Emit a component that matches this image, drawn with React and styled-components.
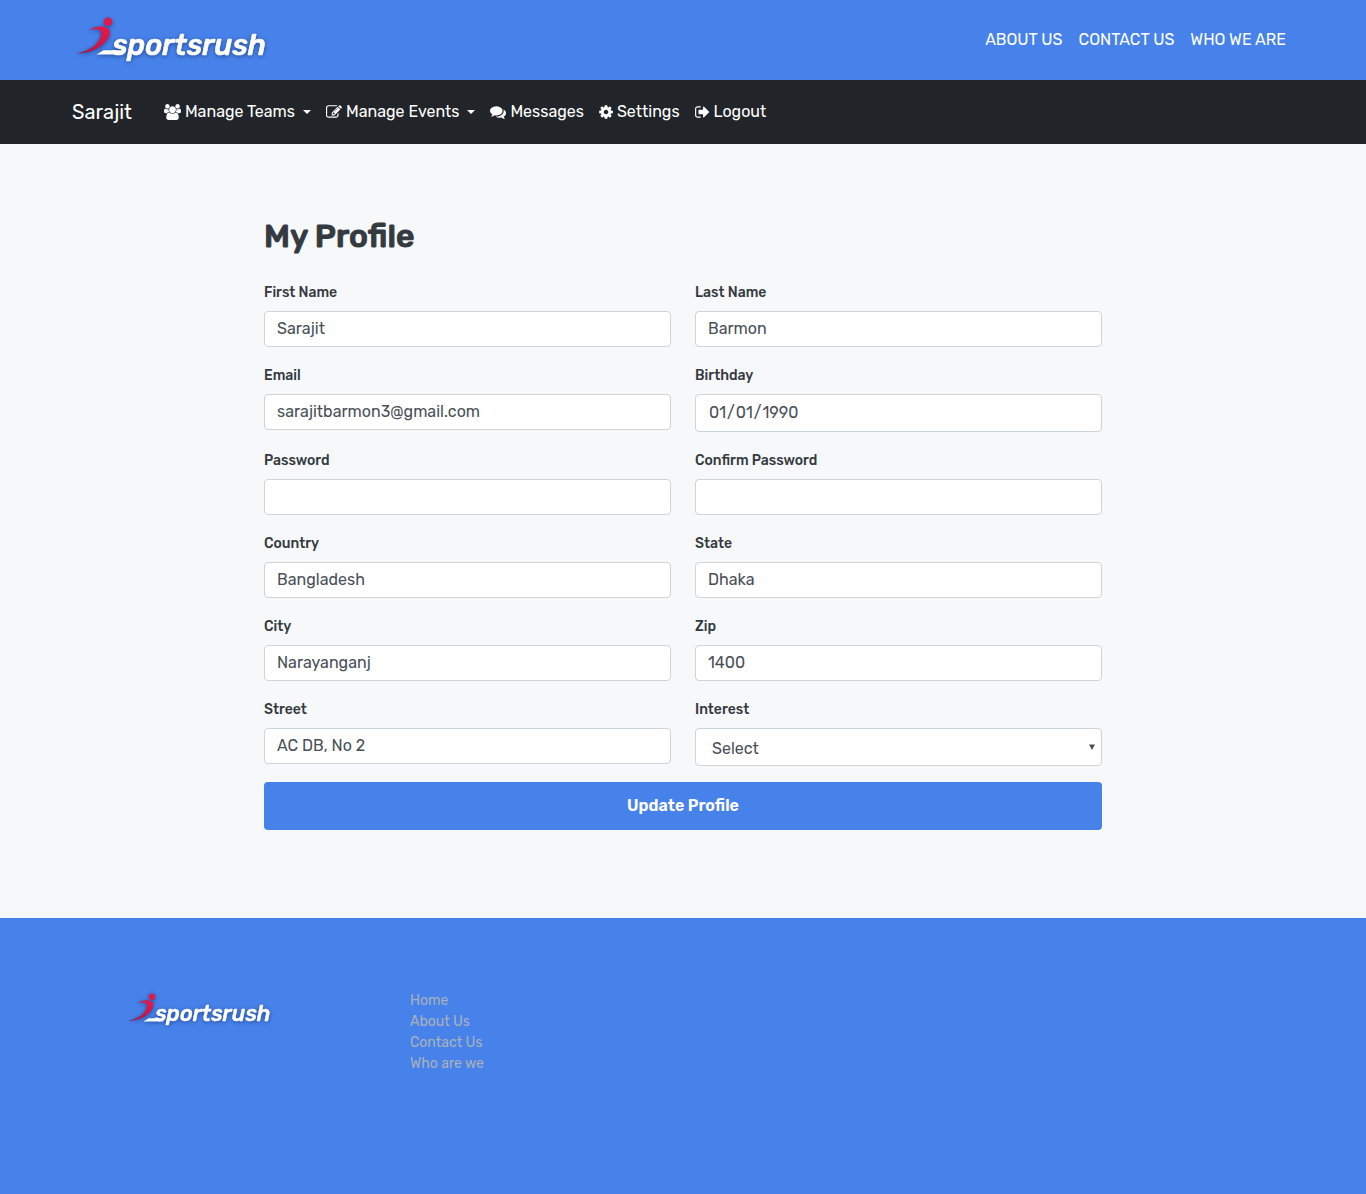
import React from "react";
import styled, { createGlobalStyle } from "styled-components";

const GlobalStyle = createGlobalStyle`
  *, *::before, *::after { box-sizing: border-box; }
  body {
    margin: 0;
    background: #f7f8fa;
    color: #343a40;
    font-family: Rubik, Roboto, "Liberation Sans", sans-serif;
    font-size: 16px;
    line-height: 24px;
  }
  a { color: inherit; text-decoration: none; }
`;

const Masthead = styled.header`
  display: flex;
  align-items: center;
  justify-content: space-between;
  padding: 10px 72px;
  background: #4782ea;
`;

const LogoLink = styled.a`
  display: block;
`;

const LogoSvg = styled.svg`
  display: block;
  width: ${(p) => p.$width}px;
  height: auto;
  overflow: visible;
  filter: drop-shadow(0 1px 2px rgba(10, 30, 90, 0.55));
`;

const TopLinks = styled.nav`
  display: flex;
  gap: 16px;
  padding: 0 8px;
  color: #fff;
`;

const Navbar = styled.nav`
  display: flex;
  align-items: center;
  min-height: 64px;
  padding: 8px 72px;
  background: #212529;
  color: #fff;
`;

const Brand = styled.a`
  margin-right: 32px;
  font-size: 20px;
`;

const NavList = styled.ul`
  display: flex;
  flex-wrap: wrap;
  gap: 15px;
  margin: 0;
  padding: 0;
  list-style: none;
`;

const NavItem = styled.a`
  display: flex;
  align-items: center;
  gap: 4px;
`;

const Glyph = styled.svg`
  display: block;
  width: ${(p) => p.$width}px;
  height: 16px;
  fill: currentColor;
`;

const Caret = styled.span`
  margin-left: 4px;
  border-top: 4px solid;
  border-left: 4px solid transparent;
  border-right: 4px solid transparent;
`;

const Main = styled.main`
  max-width: 838px;
  margin: 0 auto;
  padding: 72px 0 88px;
`;

const Title = styled.h1`
  margin: 0 0 24px;
  font-size: 32px;
  font-weight: 500;
  line-height: 40px;
  -webkit-text-stroke: 1px currentColor;
`;

const FieldGrid = styled.div`
  display: grid;
  grid-template-columns: 1fr 1fr;
  gap: 16px 24px;
  align-items: start;
  margin-bottom: 16px;
`;

const Field = styled.div`
  display: flex;
  flex-direction: column;
  gap: 6px;
`;

const Label = styled.label`
  font-size: 14px;
  font-weight: 500;
  line-height: 25px;
`;

const Input = styled.input`
  width: 100%;
  height: ${(p) => (p.type === "date" ? 38 : 36)}px;
  padding: 4px 12px 6px;
  border: 1px solid #ced4da;
  border-radius: 4px;
  background: #fff;
  color: #495057;
  font-family: inherit;
  font-size: 16px;
  font-weight: 400;

  &::-webkit-calendar-picker-indicator {
    display: none;
  }
`;

const SelectBox = styled.div`
  display: grid;
  align-items: center;
`;

const Select = styled.select`
  grid-area: 1 / 1;
  width: 100%;
  height: 38px;
  padding: 8px 16px 6px;
  border: 1px solid #ced4da;
  border-radius: 4px;
  appearance: none;
  background: #fff;
  color: #495057;
  font-family: inherit;
  font-size: 16px;
  font-weight: 400;
`;

const SelectArrow = styled.svg`
  grid-area: 1 / 1;
  justify-self: end;
  width: 6px;
  height: 6px;
  margin-right: 7px;
  fill: #495057;
  pointer-events: none;
`;

const SubmitButton = styled.button`
  width: 100%;
  height: 48px;
  border: 0;
  border-radius: 4px;
  background: #4782ea;
  color: #fff;
  font-family: inherit;
  font-size: 16px;
  font-weight: 600;
  line-height: 24px;
`;

const Footer = styled.footer`
  padding: 70px 0 120px;
  background: #4782ea;
`;

const FooterGrid = styled.div`
  display: grid;
  grid-template-columns: repeat(4, 1fr);
  max-width: 1140px;
  margin: 0 auto;
`;

const FooterColumn = styled.div`
  padding: 0 12px;
`;

const FooterLinks = styled.ul`
  margin: 2px 0 0;
  padding: 0;
  list-style: none;
  color: #a9b1bb;
  font-size: 14px;
  line-height: 21px;
`;

function Logo({ width, id }) {
  return (
    <LogoSvg $width={width} viewBox="0 0 200 60" role="img" aria-label="sportsrush">
      <defs>
        <linearGradient id={id} x1="0" y1="1" x2="1" y2="0">
          <stop offset="0" stopColor="#8e1d55" />
          <stop offset="0.45" stopColor="#c41a48" />
          <stop offset="1" stopColor="#e8184a" />
        </linearGradient>
      </defs>
      <circle cx="36" cy="11.7" r="4.3" fill="#de1a4c" />
      <path
        d="M16.5 20.4 C22 16 30 15.6 34.5 17.4 C39.5 19.6 38.5 26 34 31.2 C27 39.4 16 43.6 4.6 43.6 C13 41.4 20 38.6 24.6 33.6 C28.6 29 30.5 23 28 20.6 C25.6 18.8 21 19 16.5 20.4 Z"
        fill={`url(#${id})`}
      />
      <path d="M24.5 44.5 L31.5 40.3 H51 V44.5 Z" fill="#fff" />
      <text
        x="40"
        y="44.5"
        fill="#fff"
        stroke="#fff"
        strokeWidth="0.6"
        fontFamily="Rubik, Roboto, sans-serif"
        fontSize="29"
        fontStyle="italic"
        fontWeight="500"
      >
        sportsrush
      </text>
    </LogoSvg>
  );
}

const ICONS = {
  users: {
    box: "-64 0 1920 1792",
    width: 17,
    d: "M529 896q-162 5-265 128h-134q-82 0-138-40.5t-56-118.5q0-353 124-353 6 0 43.5 21t97.5 42.5 119 21.5q67 0 133-23-5 37-5 66 0 139 81 256zm1071 637q0 120-73 189.5t-194 69.5h-874q-121 0-194-69.5t-73-189.5q0-53 3.5-103.5t14-109 26.5-108.5 43-97.5 62-81 85.5-53.5 111.5-20q10 0 43 21.5t73 48 107 48 135 21.5 135-21.5 107-48 73-48 43-21.5q61 0 111.5 20t85.5 53.5 62 81 43 97.5 26.5 108.5 14 109 3.5 103.5zm-1024-1277q0 106-75 181t-181 75-181-75-75-181 75-181 181-75 181 75 75 181zm704 384q0 159-112.5 271.5t-271.5 112.5-271.5-112.5-112.5-271.5 112.5-271.5 271.5-112.5 271.5 112.5 112.5 271.5zm576 225q0 78-56 118.5t-138 40.5h-134q-103-123-265-128 81-117 81-256 0-29-5-66 66 23 133 23 59 0 119-21.5t97.5-42.5 43.5-21q124 0 124 353zm-128-609q0 106-75 181t-181 75-181-75-75-181 75-181 181-75 181 75 75 181z",
  },
  edit: {
    box: "0 0 1792 1792",
    width: 16,
    d: "M888 1184l116-116-152-152-116 116v56h96v96h56zm440-720q-16-16-33 1l-350 350q-17 17-1 33t33-1l350-350q17-17 1-33zm80 594v190q0 119-84.5 203.5t-203.5 84.5h-832q-119 0-203.5-84.5t-84.5-203.5v-832q0-119 84.5-203.5t203.5-84.5h832q63 0 117 25 15 7 18 23 3 17-9 29l-49 49q-14 14-32 8-23-6-45-6h-832q-66 0-113 47t-47 113v832q0 66 47 113t113 47h832q66 0 113-47t47-113v-126q0-13 9-22l64-64q15-15 35-7t20 29zm-96-738l288 288-672 672h-288v-288zm444 132l-92 92-288-288 92-92q28-28 68-28t68 28l152 152q28 28 28 68t-28 68z",
  },
  comments: {
    box: "0 0 1792 1792",
    width: 16,
    d: "M1408 768q0 139-94 257t-256.5 186.5-353.5 68.5q-86 0-176-16-124 88-278 128-36 9-86 16h-3q-11 0-20.5-8t-11.5-21q-1-3-1-6.5t.5-6.5 2-6l2.5-5 3.5-5.5 4-5 4.5-5 4-4.5q5-6 23-25t26-29.5 22.5-29 25-38.5 20.5-44q-124-72-195-177t-71-224q0-139 94-257t256.5-186.5 353.5-68.5 353.5 68.5 256.5 186.5 94 257zm384 256q0 120-71 224.5t-195 176.5q10 24 20.5 44t25 38.5 22.5 29 26 29.5 23 25q1 1 4 4.5t4.5 5 4 5 3.5 5.5l2.5 5 2 6 .5 6.5-1 6.5q-3 14-13 22t-22 7q-50-7-86-16-154-40-278-128-90 16-176 16-271 0-472-132 58 4 88 4 161 0 309-45t264-129q125-92 192-212t67-254q0-77-23-152 129 71 204 178t75 230z",
  },
  cog: {
    box: "128 0 1536 1792",
    width: 14,
    d: "M1152 896q0-106-75-181t-181-75-181 75-75 181 75 181 181 75 181-75 75-181zm512-109v222q0 12-8 23t-20 13l-185 28q-19 54-39 91 35 50 107 138 10 12 10 25t-9 23q-27 37-99 108t-94 71q-12 0-26-9l-138-108q-44 23-91 38-16 136-29 186-7 28-36 28h-222q-14 0-24.5-8.5t-11.5-21.5l-28-184q-49-16-90-37l-141 107q-10 9-25 9-14 0-25-11-126-114-165-168-7-10-7-23 0-12 8-23 15-21 51-66.5t54-70.5q-27-50-41-99l-183-27q-13-2-21-12.5t-8-23.5v-222q0-12 8-23t19-13l186-28q14-46 39-92-40-57-107-138-10-12-10-24 0-10 9-23 26-36 98.5-107.5t94.5-71.5q13 0 26 10l138 107q44-23 91-38 16-136 29-186 7-28 36-28h222q14 0 24.5 8.5t11.5 21.5l28 184q49 16 90 37l142-107q9-9 24-9 13 0 25 10 129 119 165 170 7 8 7 22 0 12-8 23-15 21-51 66.5t-54 70.5q26 50 41 98l183 28q13 2 21 12.5t8 23.5z",
  },
  signOut: {
    box: "64 0 1664 1792",
    width: 15,
    d: "M704 1440q0 4 1 20t.5 26.5-3 23.5-10 19.5-20.5 6.5h-320q-119 0-203.5-84.5t-84.5-203.5v-704q0-119 84.5-203.5t203.5-84.5h320q13 0 22.5 9.5t9.5 22.5q0 4 1 20t.5 26.5-3 23.5-10 19.5-20.5 6.5h-320q-66 0-113 47t-47 113v704q0 66 47 113t113 47h312l11.5 1 11.5 3 8 5.5 7 9 2 13.5zm928-544q0 26-19 45l-544 544q-19 19-45 19t-45-19-19-45v-288h-448q-26 0-45-19t-19-45v-384q0-26 19-45t45-19h448v-288q0-26 19-45t45-19 45 19l544 544q19 19 19 45z",
  },
};

const NAV = [
  { icon: "users", text: "Manage Teams", menu: true },
  { icon: "edit", text: "Manage Events", menu: true },
  { icon: "comments", text: "Messages" },
  { icon: "cog", text: "Settings" },
  { icon: "signOut", text: "Logout" },
];

const FIELDS = [
  { id: "first-name", label: "First Name", value: "Sarajit" },
  { id: "last-name", label: "Last Name", value: "Barmon" },
  { id: "email", label: "Email", value: "sarajitbarmon3@gmail.com", type: "email" },
  { id: "birthday", label: "Birthday", value: "1990-01-01", type: "date" },
  { id: "password", label: "Password", value: "", type: "password" },
  { id: "confirm-password", label: "Confirm Password", value: "", type: "password" },
  { id: "country", label: "Country", value: "Bangladesh" },
  { id: "state", label: "State", value: "Dhaka" },
  { id: "city", label: "City", value: "Narayanganj" },
  { id: "zip", label: "Zip", value: "1400" },
  { id: "street", label: "Street", value: "AC DB, No 2" },
];

export default function App() {
  return (
    <>
      <GlobalStyle />
      <Masthead>
        <LogoLink href="#home">
          <Logo width={200} id="runner-top" />
        </LogoLink>
        <TopLinks>
          <a href="#about">ABOUT US</a>
          <a href="#contact">CONTACT US</a>
          <a href="#who">WHO WE ARE</a>
        </TopLinks>
      </Masthead>
      <Navbar>
        <Brand href="#profile">Sarajit</Brand>
        <NavList>
          {NAV.map(({ icon, text, menu }) => (
            <li key={text}>
              <NavItem href={`#${icon}`}>
                <Glyph $width={ICONS[icon].width} viewBox={ICONS[icon].box} aria-hidden="true">
                  <path d={ICONS[icon].d} />
                </Glyph>
                {text}
                {menu && <Caret />}
              </NavItem>
            </li>
          ))}
        </NavList>
      </Navbar>
      <Main>
        <Title>My Profile</Title>
        <form onSubmit={(e) => e.preventDefault()}>
          <FieldGrid>
            {FIELDS.map(({ id, label, value, type = "text" }) => (
              <Field key={id}>
                <Label htmlFor={id}>{label}</Label>
                <Input id={id} type={type} defaultValue={value} />
              </Field>
            ))}
            <Field>
              <Label htmlFor="interest">Interest</Label>
              <SelectBox>
                <Select id="interest" defaultValue="">
                  <option value="">Select</option>
                </Select>
                <SelectArrow viewBox="0 0 6 6" aria-hidden="true">
                  <path d="M0 0.5 H6 L3 6 Z" />
                </SelectArrow>
              </SelectBox>
            </Field>
          </FieldGrid>
          <SubmitButton type="submit">Update Profile</SubmitButton>
        </form>
      </Main>
      <Footer>
        <FooterGrid>
          <FooterColumn>
            <LogoLink href="#home">
              <Logo width={150} id="runner-bottom" />
            </LogoLink>
          </FooterColumn>
          <FooterColumn>
            <FooterLinks>
              <li><a href="#home">Home</a></li>
              <li><a href="#about">About Us</a></li>
              <li><a href="#contact">Contact Us</a></li>
              <li><a href="#who">Who are we</a></li>
            </FooterLinks>
          </FooterColumn>
        </FooterGrid>
      </Footer>
    </>
  );
}
